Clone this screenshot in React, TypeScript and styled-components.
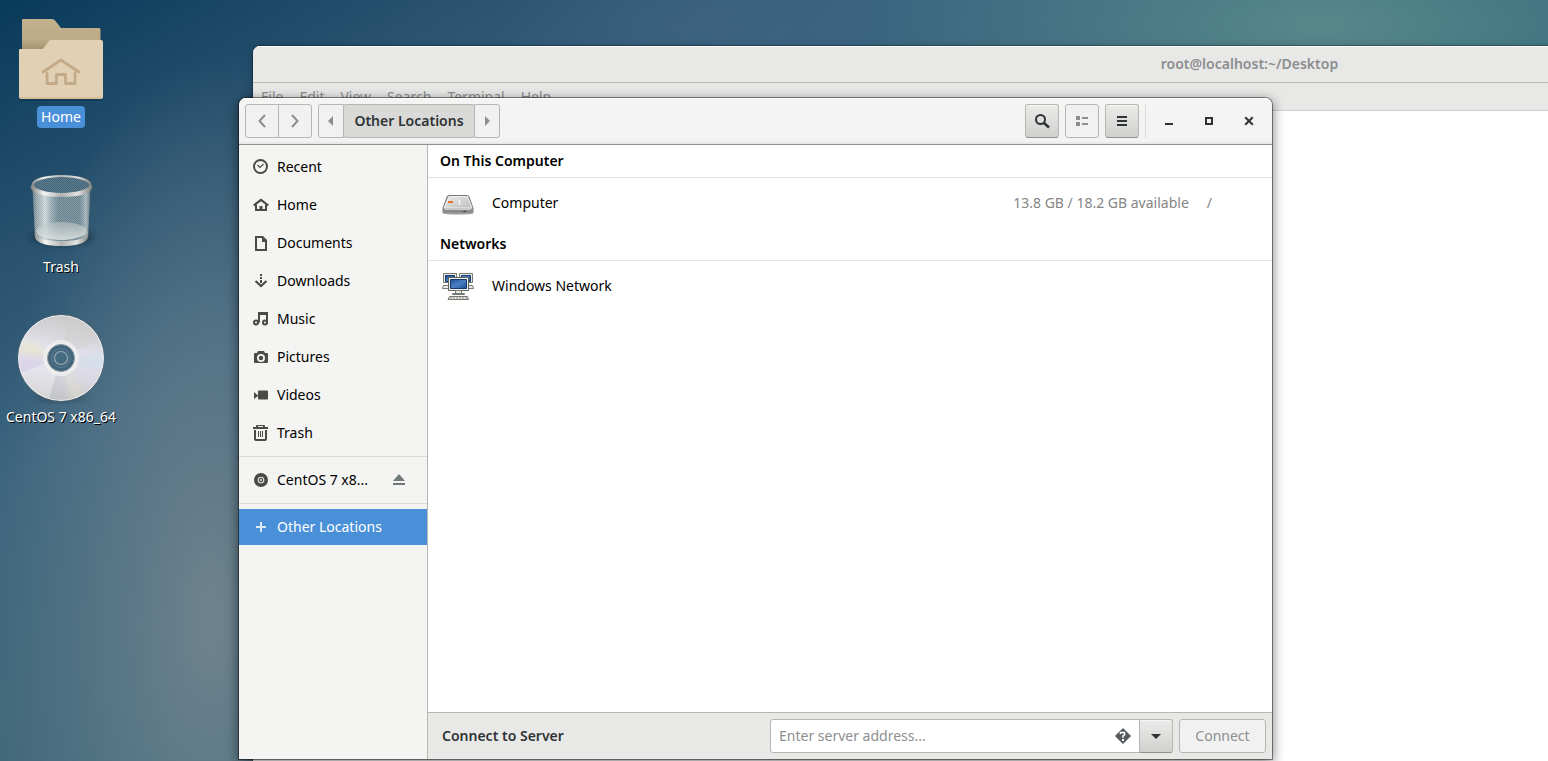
import React from "react";
import styled, { createGlobalStyle, css } from "styled-components";

const GlobalStyle = createGlobalStyle`
  *, *::before, *::after { box-sizing: border-box; }
  body {
    margin: 0;
    font-family: "Noto Sans", "Open Sans", sans-serif;
    font-size: 14px;
    line-height: 20px;
    color: #000;
  }
  button, input { font: inherit; color: inherit; margin: 0; }
  ul { list-style: none; margin: 0; padding: 0; }
  h1, h2 { margin: 0; font-size: 14px; line-height: 20px; font-weight: 600; }
`;

const Desktop = styled.main`
  position: relative;
  height: 100vh;
  min-height: 560px;
  overflow: hidden;
  background:
    radial-gradient(ellipse 460px 150px at 1320px 24px, rgba(88, 138, 140, 0.95), rgba(84, 134, 138, 0) 100%),
    radial-gradient(ellipse 200px 90px at 700px 20px, rgba(62, 98, 126, 0.7), rgba(62, 98, 126, 0) 100%),
    radial-gradient(ellipse 220px 560px at 210px 620px, rgba(114, 132, 143, 0.95), rgba(104, 126, 142, 0) 100%),
    radial-gradient(ellipse 200px 420px at 0 761px, rgba(68, 104, 122, 0.9), rgba(68, 104, 122, 0) 100%),
    linear-gradient(150deg, #083a5b 0, #28526e 220px, #3a6480 420px, #32667a 800px, #3f7280 1200px);
`;

const DesktopIcons = styled.ul`
  position: relative;
  width: 124px;
  padding-top: 10px;
`;

const DesktopItem = styled.li`
  height: 150px;
  display: flex;
  flex-direction: column;
  align-items: center;
  width: 122px;

  svg { display: block; flex: none; }
`;

const DesktopLabel = styled.span<{ $selected?: boolean }>`
  height: 22px;
  line-height: 22px;
  padding: 0 4px;
  white-space: nowrap;
  color: #fff;
  border-radius: 4px;
  ${({ $selected }) =>
    $selected
      ? css`background: #4a90d9;`
      : css`text-shadow: 1px 1px 0 #000;`}
`;

const WindowFrame = styled.section`
  position: absolute;
  display: flex;
  flex-direction: column;
  border-radius: 7px 7px 0 0;
  overflow: hidden;
`;

const TerminalWindow = styled(WindowFrame)`
  left: 253px;
  right: -698px;
  top: 46px;
  bottom: -60px;
  background: #fff;
  box-shadow: 0 0 0 1px rgba(0, 0, 0, 0.28), 0 2px 8px rgba(0, 0, 0, 0.3);
`;

const TerminalTitle = styled.header`
  height: 37px;
  display: flex;
  align-items: center;
  justify-content: center;
  background: #e8e8e7;
  border-bottom: 1px solid #b8b8b5;
  box-shadow: inset 0 1px #fff;
  color: #8b8e8f;
`;

const MenuBar = styled.nav`
  height: 28px;
  display: flex;
  gap: 16px;
  padding: 4px 8px;
  background: #e8e8e7;
  border-bottom: 1px solid #cfcfcd;
`;

const MenuButton = styled.button`
  border: 0;
  padding: 0;
  background: none;
  color: #8b8e8f;
`;

const FilesWindow = styled(WindowFrame)`
  left: 239px;
  right: 276px;
  top: 98px;
  bottom: 2px;
  background: #fff;
  box-shadow: 0 0 0 1px rgba(0, 0, 0, 0.42), 0 3px 12px 1px rgba(0, 0, 0, 0.5);
`;

const HeaderBar = styled.header`
  flex: none;
  height: 47px;
  display: flex;
  align-items: flex-start;
  justify-content: space-between;
  padding: 6px;
  background: linear-gradient(#f4f4f3 0, #f3f3f3 43px, #e4e4e2 46px);
  border-bottom: 1px solid #92928c;
  box-shadow: inset 0 1px #fff;
`;

const ToolGroup = styled.div`
  display: flex;
  gap: 6px;
`;

const Linked = styled.div`
  display: flex;
  > * { border-radius: 0; }
  > * + * { margin-left: -1px; }
  > :first-child { border-radius: 3px 0 0 3px; }
  > :last-child { border-radius: 0 3px 3px 0; }
`;

type Tone = "flat" | "raised" | "pressed";

const ToolButton = styled.button<{ $tone?: Tone; $width?: number }>`
  height: 34px;
  width: ${({ $width }) => ($width ? `${$width}px` : "auto")};
  flex: none;
  display: flex;
  align-items: center;
  justify-content: center;
  padding: 0;
  white-space: nowrap;
  border: 1px solid #b6b6b3;
  border-radius: 3px;
  background: #f1f1f1;
  color: #8b8e8f;
  ${({ $tone }) =>
    $tone === "raised" &&
    css`
      background: linear-gradient(#ebebea, #d0d0ce);
      border-bottom-color: #92928c;
      box-shadow: inset 0 1px #f7f7f7;
      color: #2e3436;
    `}
  ${({ $tone }) =>
    $tone === "pressed" &&
    css`
      background: #d9d9d7;
      color: #2e3436;
      font-weight: 600;
    `}
  svg { display: block; }
`;

const WindowControls = styled.div`
  display: flex;
  gap: 6px;
  height: 34px;
  padding-left: 6px;
  border-left: 1px solid #dcdcda;
`;

const ControlButton = styled.button`
  width: 34px;
  height: 34px;
  display: flex;
  align-items: center;
  justify-content: center;
  border: 0;
  padding: 0;
  background: none;
  color: #2e3436;
  svg { display: block; }
`;

const Body = styled.div`
  flex: 1;
  min-height: 0;
  display: flex;
`;

const Sidebar = styled.nav`
  width: 189px;
  flex: none;
  padding-top: 4px;
  background: #f4f4f2;
  border-right: 1px solid #b6b6b3;
`;

const PlaceGroup = styled.ul`
  display: flex;
  flex-direction: column;
  gap: 2px;
  & + & {
    margin-top: 5px;
    padding-top: 5px;
    border-top: 1px solid #d9d9d7;
  }
`;

const Place = styled.li<{ $selected?: boolean }>`
  height: 36px;
  display: flex;
  align-items: center;
  background: ${({ $selected }) => ($selected ? "#4a90d9" : "none")};
  color: ${({ $selected }) => ($selected ? "#fff" : "#000")};
`;

const PlaceLink = styled.a<{ $selected?: boolean }>`
  flex: 1;
  display: flex;
  align-items: center;
  gap: 8px;
  padding-left: 14px;
  color: inherit;
  text-decoration: none;
  svg {
    flex: none;
    color: ${({ $selected }) => ($selected ? "#dbe9f7" : "#4a4a48")};
  }
`;

const EjectButton = styled.button`
  border: 0;
  padding: 0;
  margin-right: 20px;
  background: none;
  color: #71797a;
  svg { display: block; }
`;

const Content = styled.div`
  flex: 1;
  min-width: 0;
  display: flex;
  flex-direction: column;
`;

const Locations = styled.div`
  flex: 1;
  min-height: 0;
`;

const GroupTitle = styled.h2`
  height: 33px;
  padding: 6px 12px;
  border-bottom: 1px solid #e3e3e2;
`;

const Location = styled.div`
  height: 50px;
  display: flex;
  align-items: center;
  padding: 0 60px 0 14px;
  svg { flex: none; margin-right: 18px; }
`;

const LocationName = styled.span`
  flex: 1;
`;

const Dim = styled.span`
  color: #858585;
  margin-left: 18px;
`;

const ConnectBar = styled.form`
  flex: none;
  height: 47px;
  display: flex;
  align-items: center;
  gap: 6px;
  padding: 0 6px 0 14px;
  background: #e8e8e7;
  border-top: 1px solid #b6b6b3;
`;

const ConnectLabel = styled.label`
  flex: 1;
  font-weight: 600;
  color: #2e3436;
`;

const AddressBox = styled.div`
  width: 370px;
  height: 34px;
  display: flex;
  align-items: center;
  padding: 0 8px;
  background: #fff;
  border: 1px solid #b6b6b3;
`;

const AddressInput = styled.input`
  flex: 1;
  min-width: 0;
  border: 0;
  padding: 0;
  outline: 0;
  background: none;
  &::placeholder { color: #8b8e8f; opacity: 1; }
`;

const HintButton = styled.button`
  border: 0;
  padding: 0;
  background: none;
  color: #555c5e;
  svg { display: block; }
`;

const Glyph = ({ children, size = 16 }: { children: React.ReactNode; size?: number }) => (
  <svg width={size} height={size} viewBox="0 0 16 16" fill="currentColor" aria-hidden="true">
    {children}
  </svg>
);

const glyphs: Record<string, React.ReactNode> = {
  recent: (
    <g fill="none" stroke="currentColor">
      <circle cx="7.5" cy="7.5" r="6.5" strokeWidth="2" />
      <path d="M4.5 6 7 8.500l3.500-3.500" strokeWidth="1.200" />
    </g>
  ),
  home: (
    <g>
      <path d="M0.700 8.500 8 2.800l7.300 5.700" fill="none" stroke="currentColor" strokeWidth="2.200" />
      <path d="M2 7.500V14h12V7.500h-2V12H9.500V9h-3v3H4V7.500z" />
    </g>
  ),
  documents: (
    <path
      fillRule="evenodd"
      d="M3 1h7l4 4v11H2V1zM4 3v11h8V7H9V3z"
    />
  ),
  downloads: (
    <g>
      <path d="M7 1h2v2H7zM7 4h2v2H7zM7 7h2v3H7z" />
      <path d="M2.500 8 8 13l5.500-5" fill="none" stroke="currentColor" strokeWidth="2.200" />
    </g>
  ),
  music: (
    <g fill="none" stroke="currentColor" strokeWidth="2">
      <circle cx="3" cy="11.500" r="2" />
      <circle cx="12" cy="11.500" r="2" />
      <path d="M6 11.500V3M5 2h10M14 2v9.500" />
      <path d="M6 3h8" />
      <path d="M5 11.500h1M14 11.500h1" />
    </g>
  ),
  pictures: (
    <path
      fillRule="evenodd"
      d="M5 2h6l1 2h2q1 0 1 1v8q0 1-1 1H2q-1 0-1-1V5q0-1 1-1h2zM8 5a4 4 0 1 0 0 8 4 4 0 0 0 0-8zM8 6.800a2.200 2.200 0 1 1 0 4.400 2.200 2.200 0 0 1 0-4.400z"
    />
  ),
  videos: <path d="M1 5l4 3.500V4.500q0-1 1-1h8q1 0 1 1v7q0 1-1 1H6q-1 0-1-1V9L1 12z" />,
  trash: (
    <g>
      <path fillRule="evenodd" d="M4 0h7q1 0 1 1v1h3v2H0V2h3V1q0-1 1-1zM5 1v1h5V1z" />
      <path fillRule="evenodd" d="M1 5h13v9q0 2-2 2H3q-2 0-2-2zM3 5v9h9V5z" />
      <path d="M5 6h1v6H5zM7 6h1v6H7zM9 6h1v6H9z" />
    </g>
  ),
  disc: (
    <g>
      <circle cx="8" cy="8" r="7" />
      <circle cx="8" cy="8" r="2.800" fill="none" stroke="#e4e4e2" strokeWidth="1.100" />
      <circle cx="8" cy="8" r="1.100" fill="#e4e4e2" />
    </g>
  ),
  plus: <path d="M7 3h2v4h4v2H9v4H7V9H3V7h4z" />,
  eject: <path d="M8 2l6 7H2zM2 11h12v2H2z" />,
  back: <path d="M11 2 5.500 8l5.500 6" fill="none" stroke="currentColor" strokeWidth="2" />,
  forward: <path d="M5 2l5.500 6L5 14" fill="none" stroke="currentColor" strokeWidth="2" />,
  left: <path d="M10 3v10L5 8z" />,
  right: <path d="M6 3v10l5-5z" />,
  search: (
    <g fill="none" stroke="currentColor">
      <circle cx="6.500" cy="6.500" r="4.500" strokeWidth="2" />
      <path d="m10 10 5 4.500" strokeWidth="2.600" />
    </g>
  ),
  list: <path d="M2 3h4v4H2zM8 4h6v2H8zM2 9h4v4H2zM8 10h6v2H8z" />,
  menu: <path d="M3 3h10v2H3zM3 7h10v2H3zM3 11h10v2H3z" />,
  minimize: <path d="M4 10h8v2H4z" />,
  maximize: <path fillRule="evenodd" d="M4 4h8v8H4zm2 2v4h4V6z" />,
  close: <path d="m4.200 4.200 7.600 7.600m0-7.600-7.600 7.600" stroke="currentColor" strokeWidth="2" />,
  down: <path d="M3 6h10l-5 5z" />,
};

const HelpGlyph = () => (
  <svg width="16" height="16" viewBox="0 0 16 16" aria-hidden="true">
    <path
      d="M8 1 15 8 8 15 1 8z"
      fill="currentColor"
      stroke="currentColor"
      strokeWidth="1.500"
      strokeLinejoin="round"
    />
    <path
      d="M5.500 6V4.500H9.500V6.800L8 8v1.700"
      fill="none"
      stroke="#fff"
      strokeWidth="1.600"
      strokeLinejoin="round"
    />
    <path d="M7 11h2v2H7z" fill="#fff" />
  </svg>
);

const FolderPicture = () => (
  <svg width="96" height="96" viewBox="0 0 96 96" aria-hidden="true">
    <defs>
      <linearGradient id="folderBack" x1="0" y1="0" x2="0" y2="1">
        <stop offset="0" stopColor="#c3b08c" />
        <stop offset="0.400" stopColor="#bdaa86" />
        <stop offset="0.620" stopColor="#a39170" />
      </linearGradient>
    </defs>
    <path d="M8 88h80q2 0 2 1.500t-2 1.500H8q-2 0-2-1.500T8 88z" fill="#0a2f48" opacity="0.500" />
    <path d="M10 9h29q2 0 3 1.500L48 18h38q1.500 0 1.500 1.500V60H9V10q0-1 1-1z" fill="url(#folderBack)" />
    <path d="M7 39h23l6-8q1-1 2-1h50q2 0 2 2v55q0 2-2 2H8q-2 0-2-2V40q0-1 1-1z" fill="#e2d0b5" />
    <path d="M7 88h82" stroke="#c9ac7c" />
    <path d="M30 62 48 50l18 12M34 63v10.500h9.500V64.500h9v9H62V63" fill="none" stroke="#c3ab89" strokeWidth="2.800" strokeLinecap="round" strokeLinejoin="round" />
  </svg>
);

const TrashPicture = () => (
  <svg width="96" height="96" viewBox="0 0 96 96" aria-hidden="true">
    <defs>
      <pattern id="mesh" width="2" height="2" patternUnits="userSpaceOnUse">
        <path d="M0 0h1v1H0zM1 1h1v1H1z" fill="#c3ced2" opacity="0.500" />
      </pattern>
      <linearGradient id="shine" x1="0" x2="1" y1="0" y2="0">
        <stop offset="0" stopColor="#6f7f85" stopOpacity="0.700" />
        <stop offset="0.080" stopColor="#c2caca" stopOpacity="0.600" />
        <stop offset="0.220" stopColor="#f1f4f4" stopOpacity="0.750" />
        <stop offset="0.450" stopColor="#93a4ac" stopOpacity="0.350" />
        <stop offset="0.800" stopColor="#8fa2aa" stopOpacity="0.350" />
        <stop offset="0.920" stopColor="#d5dcdc" stopOpacity="0.600" />
        <stop offset="1" stopColor="#5d6e75" stopOpacity="0.700" />
      </linearGradient>
      <linearGradient id="base" x1="0" x2="0" y1="0" y2="1">
        <stop offset="0" stopColor="#b9c3c4" stopOpacity="0.600" />
        <stop offset="1" stopColor="#e4e7e4" stopOpacity="0.850" />
      </linearGradient>
      <linearGradient id="rim" x1="0" x2="1" y1="0" y2="0">
        <stop offset="0" stopColor="#8c8d8b" />
        <stop offset="0.200" stopColor="#f4f4f2" />
        <stop offset="0.500" stopColor="#b4b5b3" />
        <stop offset="0.780" stopColor="#e2e2e0" />
        <stop offset="1" stopColor="#858785" />
      </linearGradient>
      <filter id="soft" x="-20%" y="-50%" width="140%" height="200%">
        <feGaussianBlur stdDeviation="3" />
      </filter>
    </defs>
    <ellipse cx="49" cy="77" rx="31" ry="8" fill="#03141f" opacity="0.450" filter="url(#soft)" />
    <path d="M19.500 27 22 76q5 9 26.500 9T75 76l2.500-49z" fill="#4a6b7a" />
    <path d="M19.500 27 22 76q5 9 26.500 9T75 76l2.500-49z" fill="url(#mesh)" />
    <path d="M19.500 27 22 76q5 9 26.500 9T75 76l2.500-49z" fill="url(#shine)" />
    <ellipse cx="48.500" cy="71" rx="25" ry="9" fill="url(#base)" />
    <path d="M21.500 73q4 8 27 8t27-8L75 78q-4 8-26.500 8T22 78z" fill="url(#rim)" />
    <ellipse cx="48.500" cy="25" rx="29" ry="9" fill="#3f6478" />
    <ellipse cx="48.500" cy="25" rx="29" ry="9" fill="url(#mesh)" opacity="0.500" />
    <ellipse cx="48.500" cy="25" rx="29" ry="9" fill="none" stroke="url(#rim)" strokeWidth="2.200" />
    <path d="M19 26q2 9 29.500 9T78 26" fill="none" stroke="url(#rim)" strokeWidth="3.600" />
  </svg>
);

const DiscPicture = () => (
  <svg width="96" height="96" viewBox="0 0 96 96" aria-hidden="true">
    <defs>
      <linearGradient id="discBase" x1="0.600" y1="0" x2="0.400" y2="1">
        <stop offset="0" stopColor="#c9c9c8" />
        <stop offset="0.400" stopColor="#e2e0e9" />
        <stop offset="0.700" stopColor="#d9d8e2" />
        <stop offset="1" stopColor="#bfbfc0" />
      </linearGradient>
      <clipPath id="discClip"><circle cx="48" cy="48" r="43" /></clipPath>
      <filter id="haze" x="-30%" y="-30%" width="160%" height="160%">
        <feGaussianBlur stdDeviation="4" />
      </filter>
      <radialGradient id="hole">
        <stop offset="0" stopColor="#4f7188" />
        <stop offset="1" stopColor="#3e6278" />
      </radialGradient>
    </defs>
    <ellipse cx="48" cy="86" rx="26" ry="5" fill="#000" opacity="0.250" filter="url(#haze)" />
    <g clipPath="url(#discClip)">
      <circle cx="48" cy="48" r="43" fill="url(#discBase)" />
      <g filter="url(#haze)">
        <path d="M44 46 8 30 8 42z" fill="#ecebc4" opacity="0.800" />
        <path d="M48 48 0 50 0 68z" fill="#dcd3ee" opacity="0.700" />
        <path d="M48 48 96 46 96 60z" fill="#cfdfed" opacity="0.900" />
        <path d="M48 48 60 90 72 88z" fill="#e6e3cc" opacity="0.600" />
      </g>
      <path d="M48 48 4 64 16 96 34 96z" fill="#f2f1f5" opacity="0.450" />
      <path d="M48 48 56 0 92 0 92 26z" fill="#d0cfcb" opacity="0.450" />
      <path d="M48 48 34 96 58 96z" fill="#c9cad0" opacity="0.350" />
    </g>
    <circle cx="48" cy="48" r="42.500" fill="none" stroke="#edeced" />
    <circle cx="48" cy="48" r="43.500" fill="none" stroke="#53646e" strokeWidth="0.800" opacity="0.700" />
    <circle cx="48" cy="48" r="15.500" fill="none" stroke="#efeeee" strokeWidth="5" opacity="0.850" />
    <circle cx="48" cy="48" r="13.500" fill="url(#hole)" stroke="#8d9ba3" />
    <circle cx="48" cy="48" r="9.500" fill="none" stroke="#5c7d91" />
    <circle cx="48" cy="48" r="6.500" fill="#456b80" stroke="#99a9b2" strokeWidth="1.200" />
  </svg>
);

const DrivePicture = () => (
  <svg width="32" height="32" viewBox="0 0 32 32" aria-hidden="true">
    <defs>
      <linearGradient id="driveTop" x1="0" y1="0" x2="1" y2="1">
        <stop offset="0" stopColor="#ececec" />
        <stop offset="1" stopColor="#bcbcbc" />
      </linearGradient>
    </defs>
    <ellipse cx="16" cy="26" rx="15" ry="2" fill="#000" opacity="0.200" />
    <path d="M6.500 8.500h19q1 0 1.500 1.500l4 11v4q0 1-1 1H2q-1 0-1-1v-4l4-11q.5-1.500 1.500-1.500z" fill="#a7a7a6" stroke="#777775" />
    <path d="M7 9.500h18.500L30 21H2z" fill="url(#driveTop)" stroke="#fafafa" strokeWidth="0.800" />
    <path d="M2 22h28v3H2z" fill="#8b8b8a" />
    <path d="M3 22.500h26" stroke="#c9c9c8" />
    <path d="M20 24.500h1M22 24.500h2" stroke="#3c3c3b" />
    <path d="M6 14h5v2H6z" fill="#e8762d" />
    <path d="M17.500 13v5" stroke="#f4f4f4" strokeWidth="1.500" />
  </svg>
);

const NetworkPicture = () => (
  <svg width="32" height="32" viewBox="0 0 32 32" aria-hidden="true">
    <defs>
      <linearGradient id="screen" x1="0" y1="0" x2="1" y2="1">
        <stop offset="0" stopColor="#1f4f94" />
        <stop offset="0.500" stopColor="#4a7fc4" />
        <stop offset="1" stopColor="#1f4f94" />
      </linearGradient>
    </defs>
    <g stroke="#777974" fill="#e9e9e5">
      <path d="M1.500 3.500h13v9h-13zM17.500 3.500h13v9h-13z" />
      <path d="M1.500 15.500h8v3h-9zM22.500 15.500h8l1 3h-9z" />
    </g>
    <path d="M3.500 5.500h9v6h-9zM19.500 5.500h9v6h-9z" fill="url(#screen)" stroke="#173a6c" />
    <path d="M6.500 7.500h20v13h-20z" fill="#efefec" stroke="#60625f" />
    <path d="M8.500 9.500h16v9h-16z" fill="url(#screen)" stroke="#173a6c" />
    <g stroke="#777974" fill="#e9e9e5">
      <path d="M13.500 20.500h6v3h-6z" />
      <path d="M10.500 23.500h12v1h-12z" />
      <path d="M7.500 26.500h18l1 3H6z" />
    </g>
    <path d="M8 28h17" stroke="#8d8f8a" strokeDasharray="2 1" />
  </svg>
);

const places = [
  ["recent", "Recent"],
  ["home", "Home"],
  ["documents", "Documents"],
  ["downloads", "Downloads"],
  ["music", "Music"],
  ["pictures", "Pictures"],
  ["videos", "Videos"],
  ["trash", "Trash"],
];

const menus = ["File", "Edit", "View", "Search", "Terminal", "Help"];

export default function App() {
  return (
    <Desktop>
      <GlobalStyle />
      <DesktopIcons>
        <DesktopItem>
          <FolderPicture />
          <DesktopLabel $selected>Home</DesktopLabel>
        </DesktopItem>
        <DesktopItem>
          <TrashPicture />
          <DesktopLabel>Trash</DesktopLabel>
        </DesktopItem>
        <DesktopItem>
          <DiscPicture />
          <DesktopLabel>CentOS 7 x86_64</DesktopLabel>
        </DesktopItem>
      </DesktopIcons>

      <TerminalWindow>
        <TerminalTitle>
          <h1>root@localhost:~/Desktop</h1>
        </TerminalTitle>
        <MenuBar>
          {menus.map((menu) => (
            <MenuButton key={menu} type="button">{menu}</MenuButton>
          ))}
        </MenuBar>
      </TerminalWindow>

      <FilesWindow>
        <HeaderBar>
          <ToolGroup>
            <Linked>
              <ToolButton type="button" $width={34} aria-label="Back"><Glyph>{glyphs.back}</Glyph></ToolButton>
              <ToolButton type="button" $width={34} aria-label="Forward"><Glyph>{glyphs.forward}</Glyph></ToolButton>
            </Linked>
            <Linked>
              <ToolButton type="button" $width={26} aria-label="Previous path"><Glyph>{glyphs.left}</Glyph></ToolButton>
              <ToolButton type="button" $tone="pressed" $width={132}>Other Locations</ToolButton>
              <ToolButton type="button" $width={26} aria-label="Next path"><Glyph>{glyphs.right}</Glyph></ToolButton>
            </Linked>
          </ToolGroup>
          <ToolGroup>
            <ToolButton type="button" $width={34} $tone="raised" aria-label="Search"><Glyph>{glyphs.search}</Glyph></ToolButton>
            <ToolButton type="button" $width={34} aria-label="View as list"><Glyph>{glyphs.list}</Glyph></ToolButton>
            <ToolButton type="button" $width={34} $tone="raised" aria-label="Menu"><Glyph>{glyphs.menu}</Glyph></ToolButton>
            <WindowControls>
              <ControlButton type="button" aria-label="Minimize"><Glyph>{glyphs.minimize}</Glyph></ControlButton>
              <ControlButton type="button" aria-label="Maximize"><Glyph>{glyphs.maximize}</Glyph></ControlButton>
              <ControlButton type="button" aria-label="Close"><Glyph>{glyphs.close}</Glyph></ControlButton>
            </WindowControls>
          </ToolGroup>
        </HeaderBar>
        <Body>
          <Sidebar>
            <PlaceGroup>
              {places.map(([icon, name]) => (
                <Place key={name}>
                  <PlaceLink href="#"><Glyph>{glyphs[icon]}</Glyph>{name}</PlaceLink>
                </Place>
              ))}
            </PlaceGroup>
            <PlaceGroup>
              <Place>
                <PlaceLink href="#"><Glyph>{glyphs.disc}</Glyph>CentOS 7 x8...</PlaceLink>
                <EjectButton type="button" aria-label="Eject"><Glyph>{glyphs.eject}</Glyph></EjectButton>
              </Place>
            </PlaceGroup>
            <PlaceGroup>
              <Place $selected>
                <PlaceLink href="#" $selected><Glyph>{glyphs.plus}</Glyph>Other Locations</PlaceLink>
              </Place>
            </PlaceGroup>
          </Sidebar>
          <Content>
            <Locations>
              <GroupTitle>On This Computer</GroupTitle>
              <Location>
                <DrivePicture />
                <LocationName>Computer</LocationName>
                <Dim>13.8 GB / 18.2 GB available</Dim>
                <Dim>/</Dim>
              </Location>
              <GroupTitle>Networks</GroupTitle>
              <Location>
                <NetworkPicture />
                <LocationName>Windows Network</LocationName>
              </Location>
            </Locations>
            <ConnectBar onSubmit={(event) => event.preventDefault()}>
              <ConnectLabel htmlFor="server">Connect to Server</ConnectLabel>
              <Linked>
                <AddressBox>
                  <AddressInput id="server" type="text" placeholder="Enter server address..." />
                  <HintButton type="button" aria-label="Address help"><HelpGlyph /></HintButton>
                </AddressBox>
                <ToolButton type="button" $width={34} $tone="raised" aria-label="Recent servers"><Glyph>{glyphs.down}</Glyph></ToolButton>
              </Linked>
              <ToolButton type="submit" $width={87} disabled>Connect</ToolButton>
            </ConnectBar>
          </Content>
        </Body>
      </FilesWindow>
    </Desktop>
  );
}
